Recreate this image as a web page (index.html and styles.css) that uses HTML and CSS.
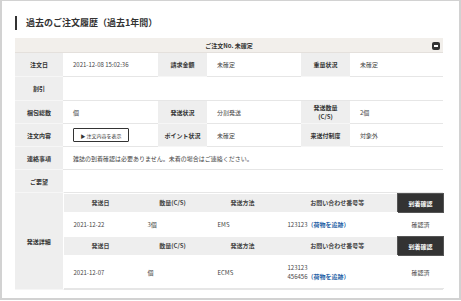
FILE: index.html
```html
<!DOCTYPE html>
<html lang="ja">
<head>
    <meta charset="UTF-8">
    <meta name="viewport" content="width=device-width, initial-scale=1.0">
    <title>過去のご注文履歴</title>
    <link rel="stylesheet" href="styles.css">
</head>
<body>
    <div class="frame">
        <h1 class="page-title">過去のご注文履歴（過去1年間）</h1>

        <table class="order">
            <colgroup>
                <col class="c-label"><col class="c-value">
                <col class="c-label2"><col class="c-value2">
                <col class="c-label3"><col class="c-value3">
            </colgroup>
            <thead>
                <tr>
                    <th colspan="6" class="order-head">
                        ご注文No. 未確定
                        <span class="toggle"></span>
                    </th>
                </tr>
            </thead>
            <tbody>
                <tr class="row-lg">
                    <th>注文日</th>
                    <td>2021-12-08 15:02:36</td>
                    <th>請求金額</th>
                    <td>未確定</td>
                    <th>重量状況</th>
                    <td>未確定</td>
                </tr>
                <tr class="row-lg">
                    <th>割引</th>
                    <td colspan="5"></td>
                </tr>
                <tr>
                    <th>梱包総数</th>
                    <td>個</td>
                    <th>発送状況</th>
                    <td>分割発送</td>
                    <th>発送数量<br>(C/S)</th>
                    <td>2個</td>
                </tr>
                <tr>
                    <th>注文内容</th>
                    <td><button class="show-btn">▶ 注文内容を表示</button></td>
                    <th>ポイント状況</th>
                    <td>未確定</td>
                    <th>来送付制度</th>
                    <td>対象外</td>
                </tr>
                <tr>
                    <th>連絡事項</th>
                    <td colspan="5">雑誌の到着確認は必要ありません。未着の場合はご連絡ください。</td>
                </tr>
                <tr>
                    <th>ご要望</th>
                    <td colspan="5"></td>
                </tr>
                <tr>
                    <th>発送詳細</th>
                    <td colspan="5" class="nested-cell">
                        <table class="ship">
                            <colgroup>
                                <col class="s1"><col class="s2"><col class="s3"><col class="s4"><col class="s5">
                            </colgroup>
                            <tr class="ship-head">
                                <th>発送日</th>
                                <th>数量(C/S)</th>
                                <th>発送方法</th>
                                <th>お問い合わせ番号等</th>
                                <th class="arrival">到着確認</th>
                            </tr>
                            <tr class="ship-row">
                                <td>2021-12-22</td>
                                <td>3個</td>
                                <td>EMS</td>
                                <td>123123<a class="track" href="#">（荷物を追跡）</a></td>
                                <td class="done">確認済</td>
                            </tr>
                            <tr class="ship-head">
                                <th>発送日</th>
                                <th>数量(C/S)</th>
                                <th>発送方法</th>
                                <th>お問い合わせ番号等</th>
                                <th class="arrival">到着確認</th>
                            </tr>
                            <tr class="ship-row tall">
                                <td>2021-12-07</td>
                                <td>個</td>
                                <td>ECMS</td>
                                <td>123123<br>456456<a class="track" href="#">（荷物を追跡）</a></td>
                                <td class="done">確認済</td>
                            </tr>
                        </table>
                    </td>
                </tr>
            </tbody>
        </table>
    </div>
</body>
</html>
```

FILE: styles.css
```css
/* General */
body {
    margin: 0;
    font-family: "Noto Sans CJK JP", "Noto Sans", sans-serif;
    color: #333;
    background-color: #ffffff;
}

.frame {
    width: 461px;
    height: 300px;
    box-sizing: border-box;
    border: 2px solid #d2d2d2;
    border-top-width: 1px;
    padding: 15px 15px 0 13px;
}

/* Title */
.page-title {
    margin: 0 0 8px 0;
    padding-left: 9px;
    border-left: 2px solid #333;
    font-size: 9px;
    line-height: 14px;
    font-weight: bold;
    color: #333;
}

/* Order table */
table.order {
    width: 428px;
    border-collapse: collapse;
    table-layout: fixed;
    font-size: 6px;
}

.c-label { width: 48px; }
.c-value { width: 95px; }
.c-label2 { width: 49px; }
.c-value2 { width: 94px; }
.c-label3 { width: 49px; }
.c-value3 { width: 93px; }

.order th,
.order td {
    height: 22px;
    padding: 0 10px;
    line-height: 9px;
    vertical-align: middle;
    border-bottom: 1px solid #e6e6e6;
}

.order tr.row-lg th,
.order tr.row-lg td {
    height: 23px;
}

.order th {
    padding: 0 2px;
    background-color: #eeeeee;
    border-bottom-color: #f6f6f6;
    font-weight: bold;
    text-align: center;
}

.order td {
    text-align: left;
    color: #444;
}

.order th.order-head {
    position: relative;
    height: 14px;
    background-color: #f2efeb;
    border-bottom: 1px solid #e4e0dc;
}

.toggle {
    position: absolute;
    right: 3px;
    top: 4px;
    width: 8px;
    height: 8px;
    border-radius: 2px;
    background-color: #333;
}

.toggle::after {
    content: "";
    position: absolute;
    left: 2px;
    right: 2px;
    top: 3px;
    height: 2px;
    background-color: #fff;
}

.show-btn {
    display: block;
    width: 56px;
    height: 14px;
    padding: 0;
    border: 1px solid #333;
    border-radius: 1px;
    background-color: #fff;
    font-family: inherit;
    font-size: 5px;
    color: #333;
    cursor: pointer;
}

/* Shipping details */
.order td.nested-cell {
    padding: 0;
    border-left: 1px solid #fff;
}

table.ship {
    width: 100%;
    border-collapse: collapse;
    table-layout: fixed;
}

.s1 { width: 74px; }
.s2 { width: 70px; }
.s3 { width: 70px; }
.s4 { width: 120px; }
.s5 { width: 46px; }

.ship .ship-head th {
    height: 18px;
    padding: 0;
    background-color: #eeeeee;
    border-bottom: 1px solid #fff;
    font-weight: bold;
    text-align: center;
}

.ship .ship-head th.arrival {
    background-color: #333;
    color: #fff;
    border: 1px solid #555;
}

.ship .ship-row td {
    height: 23px;
    padding: 0 10px;
    border-bottom: none;
    text-align: left;
}

.ship .ship-row.tall td {
    height: 32px;
    border-bottom: 1px solid #e6e6e6;
}

.ship td.done {
    padding: 0;
    text-align: center;
}

.track {
    color: #1f5fa6;
    font-weight: bold;
    text-decoration: none;
}
```
